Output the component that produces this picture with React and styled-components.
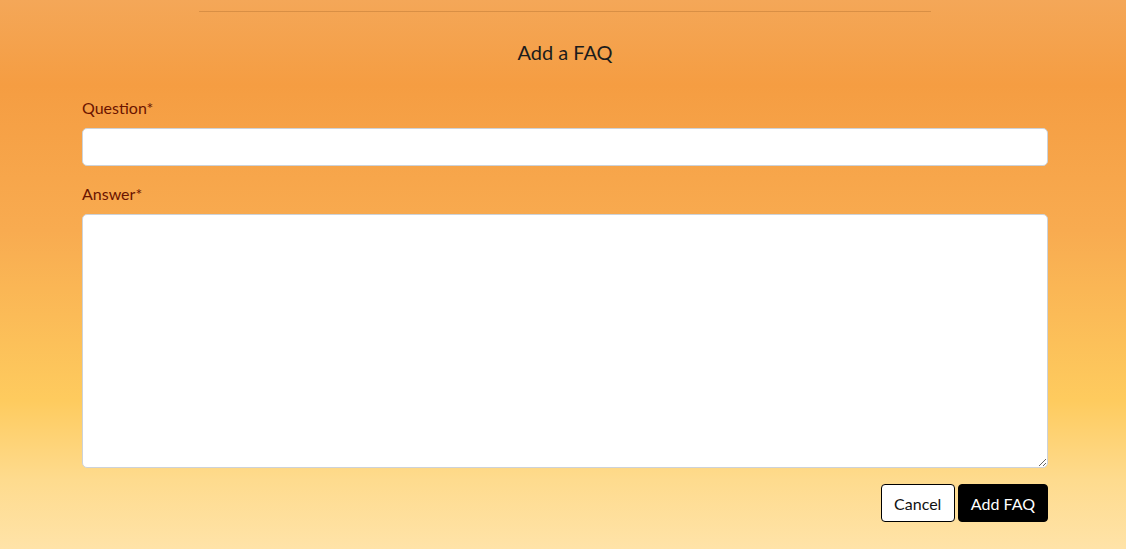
import React from "react";
import styled, { createGlobalStyle } from "styled-components";

const Global = createGlobalStyle`
  html, body { margin: 0; padding: 0; }
  body {
    font-family: Lato, "Open Sans", sans-serif;
    min-height: 549px;
    background: linear-gradient(to bottom, #f4a758 0px, #f59d42 85px, #f8ab50 230px, #fecb5e 400px, #fedb8e 480px, #ffe3a8 549px);
    background-attachment: fixed;
  }
`;

const Page = styled.div`
  height: 549px;
  box-sizing: border-box;
  padding: 11px 78px 0 82px;
`;

const Rule = styled.hr`
  width: 732px;
  margin: 0 auto;
  border: 0;
  border-top: 1px solid #d88f45;
  height: 0;
`;

const Title = styled.h2`
  margin: 28px 0 0;
  text-align: center;
  font-weight: 400;
  font-size: 20px;
  line-height: 24px;
  color: #1c1c1c;
`;

const Form = styled.form`
  display: flex;
  flex-direction: column;
  margin-top: 34px;
`;

const Label = styled.label`
  font-size: 16px;
  line-height: 20px;
  color: #6b1400;
  margin-bottom: 10px;
`;

const Input = styled.input`
  box-sizing: border-box;
  height: 38px;
  border: 1px solid #cdd2d8;
  border-radius: 5px;
  background: #fff;
  margin-bottom: 18px;
  padding: 6px 12px;
  font: inherit;
`;

const TextArea = styled.textarea`
  box-sizing: border-box;
  height: 254px;
  border: 1px solid #cdd2d8;
  border-radius: 5px;
  background: #fff;
  padding: 6px 12px;
  font: inherit;
`;

const Actions = styled.div`
  display: flex;
  justify-content: flex-end;
  gap: 3px;
  margin-top: 16px;
`;

const Button = styled.button`
  box-sizing: border-box;
  height: 38px;
  padding: 0 ${(p) => (p.$primary ? 12 : 12.5)}px;
  border: 1px solid #000;
  border-radius: 4px;
  font-family: Lato, sans-serif;
  font-size: 16px;
  background: ${(p) => (p.$primary ? "#000" : "#fff")};
  color: ${(p) => (p.$primary ? "#fff" : "#111")};
  cursor: pointer;
`;

export default function App() {
  return (
    <>
      <Global />
      <Page>
        <Rule />
        <Title>Add a FAQ</Title>
        <Form onSubmit={(e) => e.preventDefault()}>
          <Label htmlFor="q">Question*</Label>
          <Input id="q" type="text" />
          <Label htmlFor="a">Answer*</Label>
          <TextArea id="a" />
          <Actions>
            <Button type="button">Cancel</Button>
            <Button type="submit" $primary>Add FAQ</Button>
          </Actions>
        </Form>
      </Page>
    </>
  );
}
